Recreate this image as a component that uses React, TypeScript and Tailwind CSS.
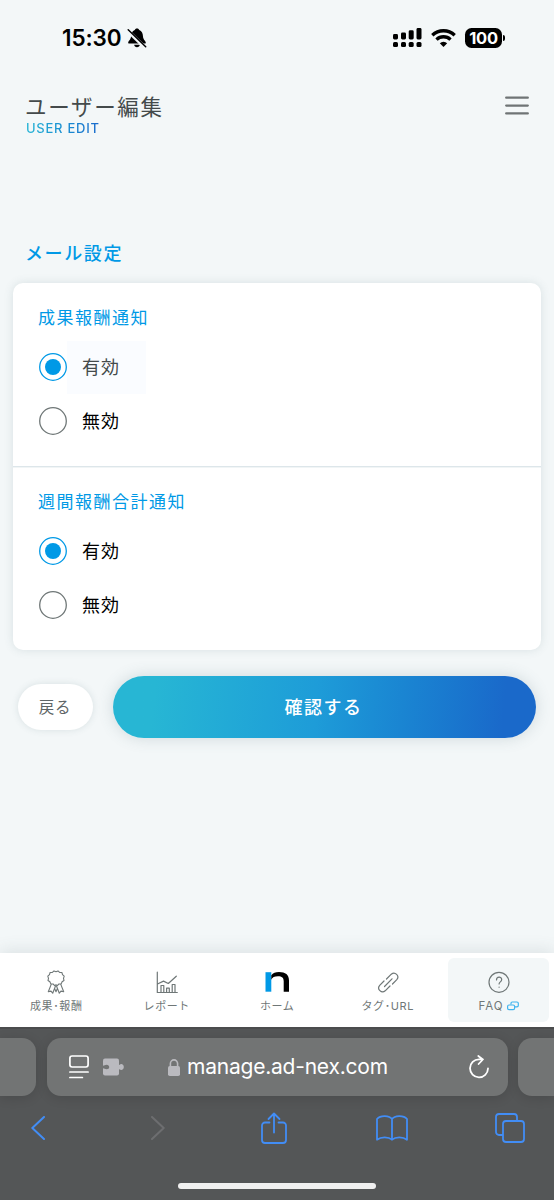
import React, { useState } from 'react';

const NavIcon = ({ name }: { name: string }) => {
  switch (name) {
    case 'reward':
      return <svg className="h-6 w-6" fill="none" stroke="#6f7777" strokeWidth="1.1" strokeLinecap="round" strokeLinejoin="round" viewBox="0 0 24 24"><path d="M12 1.700l2-.8 1.600 1.500 2.300.100.6 2.200 1.700 1.500-.7 2.100.5 2.200-1.900 1.300-.9 2.100-2.300.1-1.600 1.600-1.300-.8-1.300.8-1.600-1.600-2.300-.1-.9-2.100L4 10.500l.5-2.200-.7-2.100 1.700-1.500.6-2.200 2.300-.1L10 .9z" /><path d="M7.200 14.400L4.300 21.700l2.700-.6 1.700 2.100 2.900-7.400M16.800 14.400l2.900 7.300-2.700-.6-1.700 2.100-2.900-7.400M10.700 18.600L12 21.800l1.300-3.200" /></svg>;
    case 'report':
      return <svg className="h-6 w-6" fill="none" stroke="#6f7777" strokeWidth="1.2" strokeLinecap="round" strokeLinejoin="round" viewBox="0 0 24 24"><path d="M2.300 2.200v20.300h20M3 13.800l5.500-2.700 4.800 2.400 8-7.300M6 22v-6.500h2.800V22M11.600 22v-3.800h2.700V22M17.200 22v-7.500H20V22" /></svg>;
    case 'link':
      return <svg className="h-6 w-6" fill="none" stroke="#6f7777" strokeWidth="1.2" strokeLinecap="round" viewBox="0 0 24 24"><path d="M8.500 16.500l7.500-7.700M10.500 9l4.800-4.800a3.900 3.900 0 015.500 5.500L16.500 14M14 16l-4.800 4.800a3.900 3.900 0 01-5.500-5.500L8 11" /></svg>;
    case 'faq':
      return <svg className="h-6 w-6" fill="none" stroke="#6f7777" strokeWidth="1.2" strokeLinecap="round" viewBox="0 0 24 24"><circle cx="12" cy="12.300" r="10" /><path d="M9.500 10c0-3.700 5.200-3.700 5.200-.4 0 2.300-2.600 2.200-2.600 4.400M12.100 17v.200" /></svg>;
    case 'home':
      return <svg className="-ml-px h-6 w-6" viewBox="0 0 24 24"><path d="M.5 2.200h5.800v19.500H.5z" fill="#0099e6" /><path d="M6.300 5.200C8 3 10.500 2 14 2c6.500 0 10 2.700 10 8.500v11.200h-5.300V11.200C18.700 7.700 17 6.300 13 6.300c-3.500 0-5.900 1-6.700 3.500z" fill="#000" /></svg>;
    default: return null;
  }
};

const StatusBar = () => (
  <div className="flex h-[76px] items-center justify-between pr-[49px] pl-[62px]">
    <div className="flex items-center gap-[5px]">
      <span className="font-['Inter'] text-[22.500px] font-semibold tracking-[-0.1px] text-black">15:30</span>
      <svg className="h-5 w-5" viewBox="0 0 20 20">
        <path d="M10 .5c-1.300 0-2 .7-2.200 1.500C5 3 4.200 5.500 4 8.500c-.2 3.300-2.800 4.500-2.800 6.200 0 .6.4.9 1 .9h15.600c.6 0 1-.3 1-.9 0-1.700-2.600-2.900-2.800-6.200-.2-3-1-5.500-3.800-6.500C12 1.200 11.300.5 10 .5zM7.200 16.800h5.600c0 1.500-1.300 2.400-2.800 2.400s-2.800-.9-2.800-2.400z" />
        <path d="M0 2l18 17.500" stroke="#f3f7f8" strokeWidth="3.600" />
        <path d="M1.200 1.700l17.500 17" stroke="#000" strokeWidth="1.500" strokeLinecap="round" />
      </svg>
    </div>
    <div className="flex items-center">
      <svg className="h-5 w-[29px]" viewBox="0 0 29 20">
        <rect x="0" y="6" width="5" height="5.500" rx="1.400" /><rect x="8" y="4.500" width="5" height="7" rx="1.400" />
        <rect x="15.700" y="2.300" width="5" height="9.200" rx="1.400" /><rect x="23.500" y="0" width="5" height="11.500" rx="1.400" />
        <rect x="0" y="14" width="5" height="5" rx="1.500" /><rect x="8" y="14" width="5" height="5" rx="1.500" />
        <rect x="15.700" y="14" width="5" height="5" rx="1.500" /><rect x="23.500" y="14" width="5" height="5" rx="1.500" />
      </svg>
      <svg className="ml-[9px] h-[18px] w-[25px]" fill="none" stroke="#000" strokeWidth="3.300" viewBox="0 0 25 18">
        <path d="M1.300 6.300a16 16 0 0122.400 0M5.500 10.600a10 10 0 0114 0" />
        <path d="M12.500 18L8.800 14.200a5.300 5.300 0 017.400 0z" fill="#000" stroke="none" />
      </svg>
      <div className="ml-[9px] flex h-[20px] w-[37px] items-center justify-center rounded-[6.500px] bg-black font-['Inter'] text-[16.500px] leading-none font-bold tracking-[-0.3px] text-white">100</div>
      <div className="ml-[1px] h-[6px] w-[2px] rounded-r-full bg-black"></div>
    </div>
  </div>
);

const Header = () => (
  <header className="flex h-[70px] items-start justify-between pr-[25px] pl-[25px]">
    <div className="pt-[14px]">
      <h1 className="mb-px text-[21.500px] leading-[31px] tracking-[1.700px] text-[#444a4b]">ユーザー編集</h1>
      <p className="ml-px w-[74px] bg-linear-to-r from-[#27b5d5] to-[#1a69cc] bg-clip-text font-['Inter'] text-[13px] leading-[13px] font-medium tracking-[0.750px] whitespace-nowrap text-transparent">USER EDIT</p>
    </div>
    <svg className="mt-[20px] h-5 w-6" fill="none" stroke="#6f7475" strokeWidth="2.300" strokeLinecap="round" viewBox="0 0 24 20"><path d="M1.200 1.700h21.600M1.200 9.600h21.600M1.200 17.400h21.600" /></svg>
  </header>
);

type RadioProps = { label: string; checked: boolean; focused?: boolean; onSelect: () => void };

const Radio = ({ label, checked, focused, onSelect }: RadioProps) => (
  <button onClick={onSelect} className="flex h-[54px] items-center">
    <svg className="h-7 w-7" fill="none" viewBox="0 0 28 28">
      <circle cx="14" cy="14" r="13.300" stroke={checked ? '#0099e6' : '#6f7777'} strokeWidth="1.300" />
      {checked && <circle cx="14" cy="14" r="8" fill="#0099e6" />}
    </svg>
    <span className={`flex h-[53px] w-[79px] items-center pb-[2px] pl-[15px] text-[18px] tracking-[1px] ${focused ? 'bg-[#fafcff] text-[#444a4b]' : 'text-black'}`}>{label}</span>
  </button>
);

const MailSetting = ({ title, focused }: { title: string; focused?: boolean }) => {
  const [enabled, setEnabled] = useState(true);
  return (
    <div className="flex h-[183px] flex-col items-start pt-[20px] pl-[26px]">
      <h3 className="mb-[9px] -ml-px text-[17px] leading-[28px] tracking-[1.500px] text-[#0099e6]">{title}</h3>
      <Radio label="有効" checked={enabled} focused={focused} onSelect={() => setEnabled(true)} />
      <Radio label="無効" checked={!enabled} onSelect={() => setEnabled(false)} />
    </div>
  );
};

const TabBar = () => {
  const tabs = [
    { name: '成果･報酬', icon: 'reward' },
    { name: 'レポート', icon: 'report' },
    { name: 'ホーム', icon: 'home' },
    { name: 'タグ･URL', icon: 'link' },
    { name: 'FAQ', icon: 'faq' },
  ];

  return (
    <nav className="flex h-[74px] bg-white py-[5px] pr-[5px] pl-px shadow-[0_-2px_16px_rgba(70,90,100,0.14)]">
      {tabs.map((tab) => (
        <div key={tab.icon} className={`flex flex-col items-center rounded-md pt-[12px] ${tab.icon === 'faq' ? 'ml-auto w-[101px] bg-[#f3f7f8]' : 'w-[110.500px]'}`}>
          <NavIcon name={tab.icon} />
          <span className="mt-1 flex items-center gap-[3px] font-['Inter','Noto_Sans_CJK_JP',sans-serif] text-[11px] leading-4 tracking-[0.6px] text-[#6f7777]">
            {tab.icon === 'faq' ? <span className="text-[11.500px] tracking-[1px]">{tab.name}</span> : tab.name}
            {tab.icon === 'faq' && (
              <svg className="h-[10px] w-3" fill="none" stroke="#41b4ee" strokeWidth="1.200" viewBox="0 0 12 10"><rect x=".6" y="4" width="7" height="4.700" rx="1.400" /><path d="M4 3.500V2.200C4 1.300 4.500 1 5.200 1h4.700c.9 0 1.400.5 1.400 1.300v2.200c0 .8-.5 1.300-1.400 1.300H8" /></svg>
            )}
          </span>
        </div>
      ))}
    </nav>
  );
};

const BrowserBar = () => (
  <div className="flex h-[173px] flex-col border-t-2 border-[#4b4c4d] bg-[#545657] pt-[9px]">
    <div className="flex h-[58px] gap-[10.500px]">
      <div className="w-9 rounded-r-[14px] bg-[#727474] shadow-[0_2px_12px_rgba(0,0,0,0.13)]"></div>
      <div className="flex w-[461px] items-center rounded-[14px] bg-[#727474] pr-[18px] pl-[22px] shadow-[0_2px_12px_rgba(0,0,0,0.13)]">
        <svg className="h-6 w-5" fill="none" stroke="#fff" strokeWidth="1.700" strokeLinecap="round" viewBox="0 0 20 24"><rect x=".9" y="1" width="18.200" height="11" rx="2.200" /><path d="M.9 17h18.200M.9 22.500h12.500" /></svg>
        <svg className="ml-[14px] h-[18px] w-[21px]" viewBox="0 0 21 18">
          <rect y=".5" width="16" height="17" rx="2" fill="#bababf" />
          <path d="M15 7.300c1.500 0 2-1.300 3.200-1.300 1.600 0 2.600 1.400 2.600 3s-1 3-2.600 3c-1.200 0-1.700-1.300-3.200-1.300z" fill="#bababf" />
          <path d="M0 7.700c1.500 0 2-1 3.700-1 1.500 0 2.500 1 2.500 2.300s-1 2.300-2.500 2.300c-1.700 0-2.200-1-3.700-1z" fill="#727474" />
        </svg>
        <svg className="ml-[44px] h-[17px] w-3" viewBox="0 0 12 17"><rect y="7" width="12" height="10" rx="1.800" fill="#bababf" /><path d="M2.400 8V4.500a3.600 3.600 0 017.200 0V8" fill="none" stroke="#bababf" strokeWidth="1.600" /></svg>
        <span className="ml-[7.500px] font-['Inter'] text-[21px] tracking-[-0.220px] text-white">manage.ad-nex.com</span>
        <svg className="mr-px ml-auto h-6 w-5" fill="none" stroke="#fff" strokeWidth="1.800" strokeLinecap="round" strokeLinejoin="round" viewBox="0 0 20 24"><path d="M19 13.500a9 9 0 11-9-9.200h4M9.300 1l4.600 3.500-4.300 4.500" /></svg>
      </div>
      <div className="flex-1 rounded-l-[14px] bg-[#727474] shadow-[0_2px_12px_rgba(0,0,0,0.13)]"></div>
    </div>
    <div className="flex h-[64px] items-center justify-between pr-[28px] pl-[22px]">
      <div className="flex w-8 justify-center">
        <svg className="h-[24px] w-[14px]" fill="none" stroke="#428df5" strokeWidth="2" strokeLinecap="round" strokeLinejoin="round" viewBox="0 0 14 24"><path d="M13 1L1.300 12 13 23" /></svg>
      </div>
      <div className="flex w-8 justify-center pl-1">
        <svg className="h-[24px] w-[14px]" fill="none" stroke="#6d6e70" strokeWidth="2" strokeLinecap="round" strokeLinejoin="round" viewBox="0 0 14 24"><path d="M1 1l11.700 11L1 23" /></svg>
      </div>
      <div className="flex w-8 justify-center">
        <svg className="h-8 w-[26px]" fill="none" stroke="#428df5" strokeWidth="1.800" strokeLinecap="round" strokeLinejoin="round" viewBox="0 0 26 32"><path d="M8.500 10.500H4a3 3 0 00-3 3V28a3 3 0 003 3h18a3 3 0 003-3V13.500a3 3 0 00-3-3h-4.500M13 20.500V1.500M7.500 7L13 1.500 18.500 7" /></svg>
      </div>
      <svg className="h-[26px] w-8" fill="none" stroke="#428df5" strokeWidth="1.800" strokeLinecap="round" strokeLinejoin="round" viewBox="0 0 32 26"><path d="M16 4C13.500.4 4.500-.2 1 4v20.700c4-3.200 11.500-3.200 15 0 3.500-3.200 11-3.200 15 0V4c-3.500-4.200-12.500-3.600-15 0zM16 4v20.700" /></svg>
      <div className="flex w-8 justify-center">
        <svg className="h-[30px] w-[30px]" fill="none" stroke="#428df5" strokeWidth="1.800" strokeLinejoin="round" viewBox="0 0 30 30"><rect x="8" y="8" width="21" height="21" rx="3" /><path d="M8 22H4a3 3 0 01-3-3V4a3 3 0 013-3h15a3 3 0 013 3v4" /></svg>
      </div>
    </div>
    <div className="mt-[23px] ml-[178px] h-[6px] w-[198px] rounded-full bg-[#f0f0f0]"></div>
  </div>
);

const App: React.FC = () => {
  return (
    <div className="flex h-[1200px] w-[554px] flex-col overflow-hidden bg-[#f3f7f8] font-['Noto_Sans_CJK_JP',sans-serif]">
      <StatusBar />
      <Header />

      <main className="flex-1">
        <h2 className="mt-[91px] pl-[25px] text-[18px] leading-[30px] font-medium tracking-[1.600px] text-[#0099e6]">メール設定</h2>
        <section className="mt-[16px] ml-[13px] w-[528px] rounded-[10px] bg-white shadow-[0_0_10px_rgba(70,100,110,0.15)]">
          <MailSetting title="成果報酬通知" focused />
          <div className="h-px bg-[#dde6ea] shadow-[0_1px_0_#f1f5f6]"></div>
          <MailSetting title="週間報酬合計通知" />
        </section>
        <div className="mt-[26px] flex items-center gap-5 pr-[18px] pl-[18px]">
          <button className="h-[46px] w-[75px] rounded-full bg-white pr-px text-[15.500px] tracking-[0.800px] text-[#5f6667] shadow-[0_0_7px_rgba(70,100,110,0.15)]">戻る</button>
          <button className="h-[62px] flex-1 rounded-full bg-linear-95 from-[#27b6d4] from-10% via-[#1e9cd8] via-48% to-[#1a69ca] to-92% pr-[2px] pb-[2px] text-[18px] font-medium tracking-[1.500px] text-white shadow-[0_0_16px_rgba(70,100,110,0.2)]">確認する</button>
        </div>
      </main>

      <TabBar />
      <BrowserBar />
    </div>
  );
};

export default App;
